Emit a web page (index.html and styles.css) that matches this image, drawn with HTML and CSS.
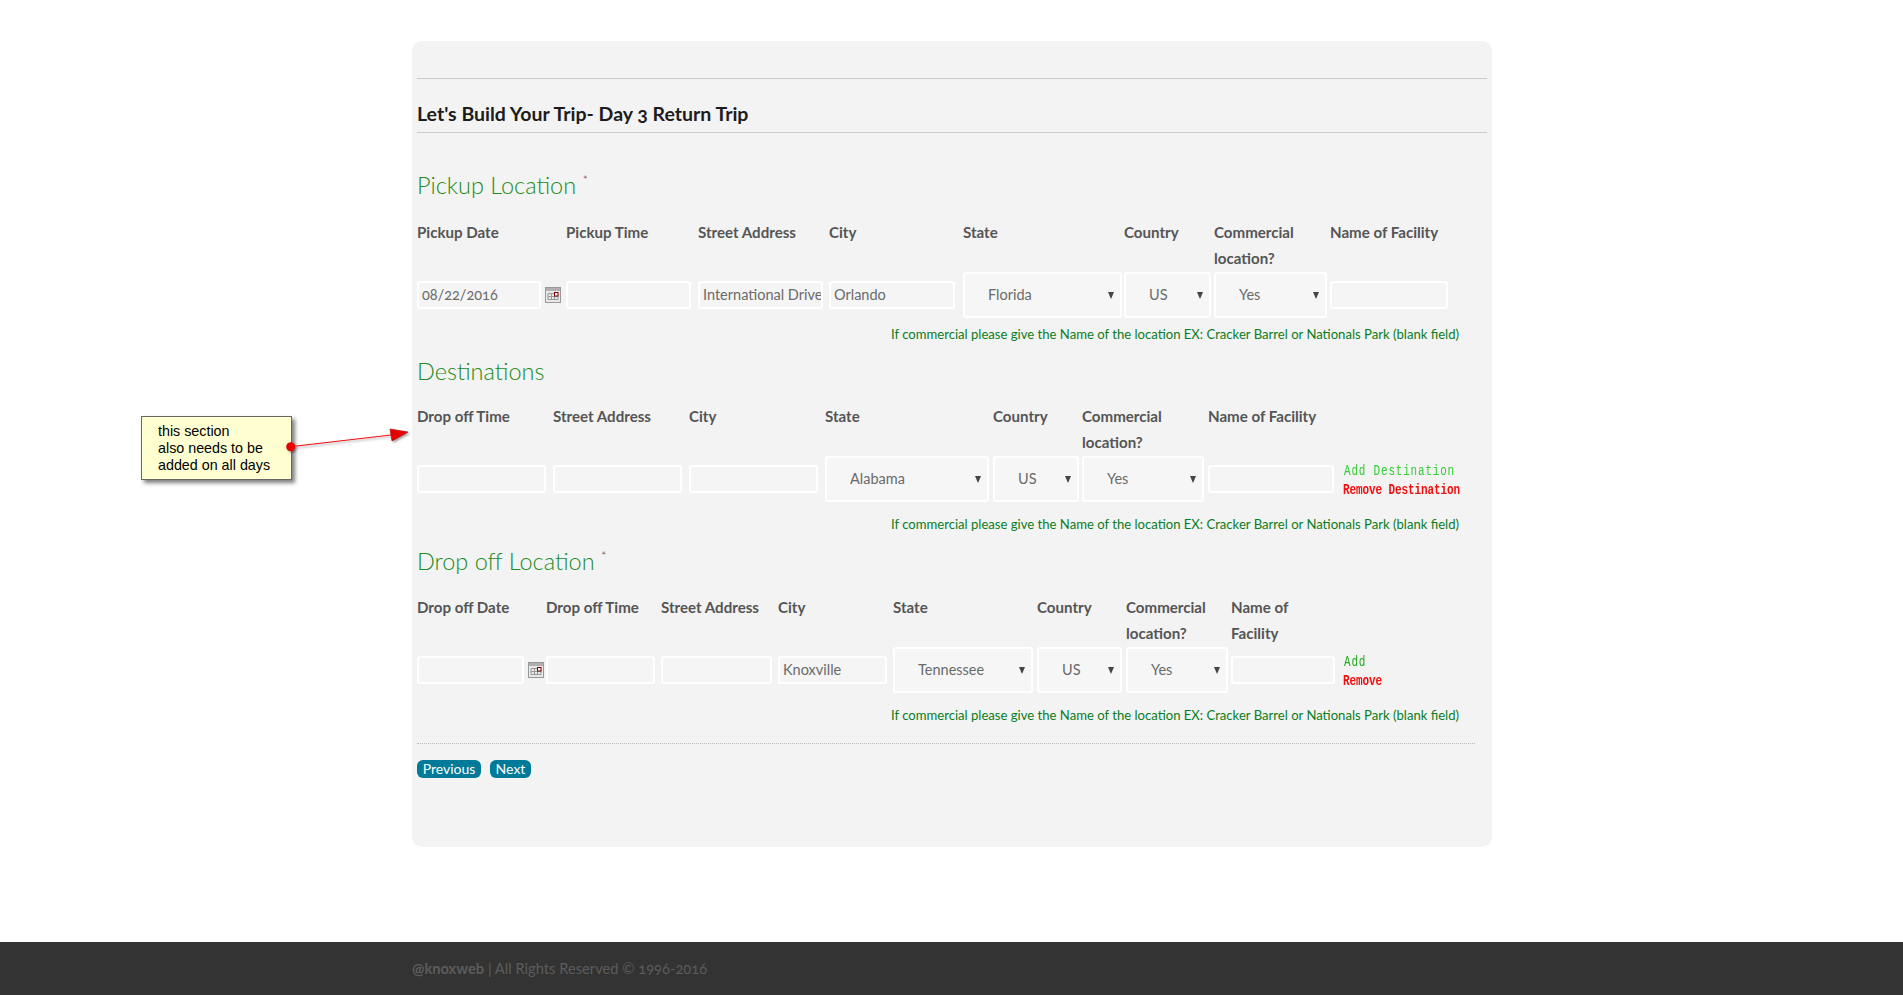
FILE: index.html
```html
<!DOCTYPE html>
<html lang="en">
<head>
<meta charset="utf-8">
<title>Let's Build Your Trip</title>
<link rel="stylesheet" href="styles.css">
</head>
<body>
<main class="panel">
  <hr class="rule rule-top">
  <h2 class="title">Let's Build Your Trip- Day 3 Return Trip</h2>
  <hr class="rule">

  <h3 class="section-heading pickup-heading">Pickup Location <sup class="req">*</sup></h3>
  <div class="row row-pickup">
    <div class="cell"><label>Pickup Date</label><div class="field"><input class="w124" value="08/22/2016"><svg class="cal" viewBox="0 0 16 16"><rect x=".5" y=".5" width="15" height="15" fill="#e8e8e8" stroke="#999"/><rect x="1" y="1" width="14" height="3" fill="#b0b0b0"/><path d="M3 6.500h10v6H3zM6.500 6.500v6M9.500 6.500v6M3 9.500h10" fill="none" stroke="#999"/><rect x="9.500" y="5.500" width="3.500" height="3.500" fill="#fff" stroke="#800"/></svg></div></div>
    <div class="cell"><label>Pickup Time</label><div class="field"><input class="w125"></div></div>
    <div class="cell"><label>Street Address</label><div class="field"><input class="w125" value="International Drive"></div></div>
    <div class="cell"><label>City</label><div class="field"><input class="w126" value="Orlando"></div></div>
    <div class="cell"><label>State</label><div class="field"><span class="select w159"><select><option>Florida</option></select></span></div></div>
    <div class="cell"><label>Country</label><div class="field"><span class="select w87"><select><option>US</option></select></span></div></div>
    <div class="cell"><label>Commercial location?</label><div class="field"><span class="select w113"><select><option>Yes</option></select></span></div></div>
    <div class="cell"><label>Name of Facility</label><div class="field"><input class="w118"></div></div>
  </div>
  <p class="hint hint-first">If commercial please give the Name of the location EX: Cracker Barrel or Nationals Park (blank field)</p>

  <h3 class="section-heading">Destinations</h3>
  <div class="row row-dest">
    <div class="cell"><label>Drop off Time</label><div class="field"><input class="w129"></div></div>
    <div class="cell"><label>Street Address</label><div class="field"><input class="w129"></div></div>
    <div class="cell"><label>City</label><div class="field"><input class="w129"></div></div>
    <div class="cell"><label>State</label><div class="field"><span class="select w164"><select><option>Alabama</option></select></span></div></div>
    <div class="cell"><label>Country</label><div class="field"><span class="select w86"><select><option>US</option></select></span></div></div>
    <div class="cell"><label>Commercial location?</label><div class="field"><span class="select w122"><select><option>Yes</option></select></span></div></div>
    <div class="cell"><label>Name of Facility</label><div class="field"><input class="w126"></div></div>
    <div class="actions"><a class="add">Add Destination</a><a class="remove">Remove Destination</a></div>
  </div>
  <p class="hint">If commercial please give the Name of the location EX: Cracker Barrel or Nationals Park (blank field)</p>

  <h3 class="section-heading drop-heading">Drop off Location <sup class="req">*</sup></h3>
  <div class="row row-drop">
    <div class="cell"><label>Drop off Date</label><div class="field"><input class="w107"><svg class="cal" viewBox="0 0 16 16"><rect x=".5" y=".5" width="15" height="15" fill="#e8e8e8" stroke="#999"/><rect x="1" y="1" width="14" height="3" fill="#b0b0b0"/><path d="M3 6.500h10v6H3zM6.500 6.500v6M9.500 6.500v6M3 9.500h10" fill="none" stroke="#999"/><rect x="9.500" y="5.500" width="3.500" height="3.500" fill="#fff" stroke="#800"/></svg></div></div>
    <div class="cell"><label>Drop off Time</label><div class="field"><input class="w109"></div></div>
    <div class="cell"><label>Street Address</label><div class="field"><input class="w111"></div></div>
    <div class="cell"><label>City</label><div class="field"><input class="w109" value="Knoxville"></div></div>
    <div class="cell"><label>State</label><div class="field"><span class="select w140"><select><option>Tennessee</option></select></span></div></div>
    <div class="cell"><label>Country</label><div class="field"><span class="select w85"><select><option>US</option></select></span></div></div>
    <div class="cell"><label>Commercial location?</label><div class="field"><span class="select w102"><select><option>Yes</option></select></span></div></div>
    <div class="cell"><label>Name of<br>Facility</label><div class="field"><input class="w104"></div></div>
    <div class="actions"><a class="add add-dark">Add</a><a class="remove">Remove</a></div>
  </div>
  <p class="hint">If commercial please give the Name of the location EX: Cracker Barrel or Nationals Park (blank field)</p>

  <div class="nav">
    <button class="btn btn-prev">Previous</button>
    <button class="btn btn-next">Next</button>
  </div>
</main>

<footer class="footer"><div class="footer-inner"><b>@knoxweb</b> | All Rights Reserved © 1996-2016</div></footer>

<div class="callout">this section<br>also needs to be<br>added on all days</div>
<svg class="arrow" width="130" height="30" viewBox="0 0 130 30">
  <defs><filter id="s" x="-20%" y="-50%" width="140%" height="200%"><feDropShadow dx="1.500" dy="1.500" stdDeviation="1" flood-color="#000" flood-opacity=".4"/></filter></defs>
  <g filter="url(#s)">
    <path d="M4.700 20.700 105 9" stroke="#f01010" stroke-width="1" fill="none"/>
    <circle cx="4.700" cy="20.700" r="4.500" fill="#e60000"/>
    <path d="M104 3 122 6 106 15z" fill="#e60000" stroke="#a80000" stroke-width=".6"/>
  </g>
</svg>
</body>
</html>
```
FILE: styles.css
```css
* { box-sizing: border-box; }
html, body { margin: 0; height: 100%; }
body {
  background: #fff;
  font-family: Lato, "Open Sans", sans-serif;
  font-variant-numeric: oldstyle-nums;
  color: #555;
  font-size: 14px;
  position: relative;
  overflow: hidden;
}

.panel {
  width: 1080px;
  height: 806px;
  margin: 41px 0 0 412px;
  padding: 0 5px;
  background: #f3f3f3;
  border-radius: 10px;
  overflow: hidden;
}

.rule { margin: 0; border: 0; border-top: 1.5px solid #ccc; height: 0; }
.rule-top { margin-top: 37px; }

.title {
  margin: 0;
  padding: 22px 0 5px;
  font-size: 19.500px;
  line-height: 26px;
  font-weight: 700;
  color: #1c1c1c;
}

.section-heading {
  margin: 12px 0 18px;
  font-size: 23.500px;
  line-height: 30px;
  font-weight: 300;
  color: #228b22;
}
.pickup-heading { margin-top: 37px; margin-bottom: 20px; }
.drop-heading { margin-bottom: 19px; }
.req { font-size: 13px; line-height: 0; color: #7a4a4a; vertical-align: 9px; }

.row { display: grid; height: 98px; }
.row-pickup { grid-template-columns: 149px 132px 131px 134px 161px 90px 116px 118px; }
.row-dest { grid-template-columns: 136px 136px 136px 168px 89px 126px 135px 1fr; }
.row-drop { grid-template-columns: 129px 115px 117px 115px 144px 89px 105px 112px 1fr; }

.cell { display: flex; flex-direction: column; }
.cell label {
  display: block;
  height: 53px;
  margin-top: -1px;
  font-size: 15.100px;
  line-height: 26px;
  font-weight: 700;
  color: #555;
}
.field { display: flex; align-items: center; height: 46px; }

input {
  height: 28px;
  padding: 0 0 2px 3px;
  border: 2px solid #fff;
  border-radius: 3px;
  background: #f5f5f5;
  font: 400 14.500px Lato, sans-serif;
  font-variant-numeric: oldstyle-nums;
  color: #6a6a6a;
}

.select { position: relative; display: block; height: 46px; }
.select select {
  appearance: none;
  width: 100%;
  height: 100%;
  padding: 0 0 2px 23px;
  border: 2px solid #fff;
  border-radius: 3px;
  background: #f6f6f6;
  font: 400 14.500px Lato, sans-serif;
  color: #6a6a6a;
}
.select::after {
  content: "";
  position: absolute;
  right: 8px;
  top: 20px;
  border-left: 3.500px solid transparent;
  border-right: 3.500px solid transparent;
  border-top: 7px solid #444;
}

.w85 { width: 85px; } .w86 { width: 86px; } .w87 { width: 87px; }
.w102 { width: 102px; } .w104 { width: 104px; } .w107 { width: 107px; }
.w109 { width: 109px; } .w111 { width: 111px; } .w113 { width: 113px; }
.w118 { width: 118px; } .w122 { width: 122px; } .w124 { width: 124px; }
.w125 { width: 125px; } .w126 { width: 126px; } .w129 { width: 129px; }
.w140 { width: 140px; } .w159 { width: 159px; } .w164 { width: 164px; }

.cal { width: 16px; height: 16px; margin-left: 4px; flex: none; }

.actions {
  display: flex;
  flex-direction: column;
  justify-content: center;
  gap: 4px;
  padding-top: 56px;
  font: 400 11px/15px "Liberation Mono", monospace;
  white-space: nowrap;
}
.add, .remove { display: block; transform: scaleY(1.3); }
.add { color: #33cc33; margin-left: 1px; letter-spacing: .8px; }
.add-dark { color: #22aa22; }
.remove { color: #f01010; letter-spacing: -.1px; font-weight: 700; }

.hint {
  margin: 12px 0 0;
  padding-left: 474px;
  font-size: 13.100px;
  line-height: 20px;
  color: #0a7d1e;
  white-space: nowrap;
}
.hint-first { margin-top: 6px; }

.nav {
  display: flex;
  gap: 9px;
  width: 1058px;
  margin-top: 18px;
  padding-top: 16px;
  border-top: 1px dotted #bbb;
}
.btn {
  height: 18px;
  padding: 0 0 1px;
  border: 0;
  border-radius: 6px;
  background: #007a99;
  color: #fff;
  font: 400 14px Lato, sans-serif;
}
.btn-prev { width: 64px; }
.btn-next { width: 41px; }

.footer {
  height: 53px;
  margin-top: 95px;
  background: #333;
  color: #5c5c5c;
  font-size: 14.700px;
  line-height: 52px;
}
.footer-inner { margin-left: 412px; font-weight: 400; }
.footer-inner b { font-weight: 700; }

.callout {
  position: absolute;
  left: 141px;
  top: 416px;
  width: 151px;
  height: 64px;
  padding: 6px 0 0 16px;
  background: #ffffd2;
  border: 1px solid #666;
  box-shadow: 3px 3px 4px rgba(0,0,0,.5);
  font: 14.300px/17px "Liberation Sans", sans-serif;
  color: #000;
}
.arrow { position: absolute; left: 286px; top: 426px; overflow: visible; }
```
